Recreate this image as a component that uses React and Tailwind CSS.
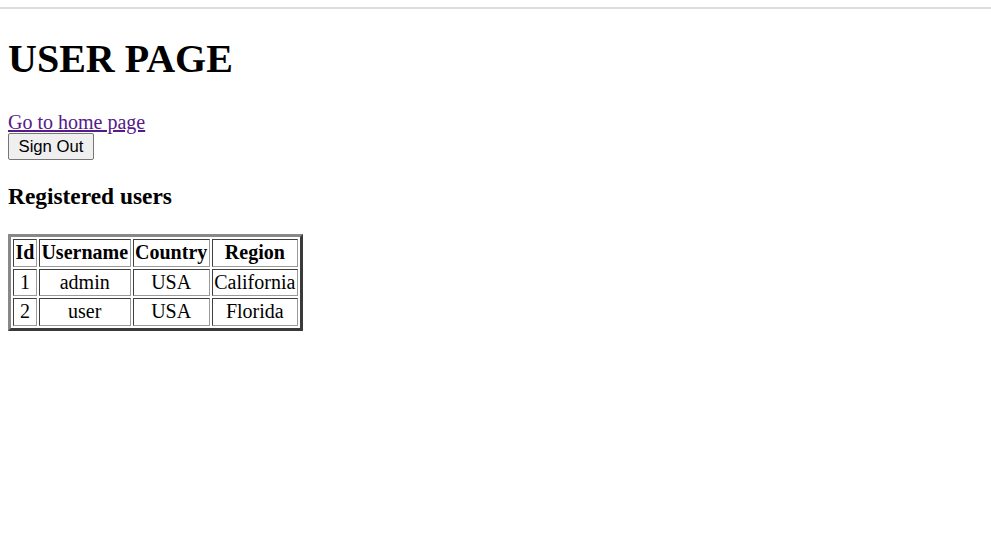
const users = [
  { id: 1, username: 'admin', country: 'USA', region: 'California' },
  { id: 2, username: 'user', country: 'USA', region: 'Florida' },
];

const cell =
  'border border-solid border-t-[#404040] border-l-[#404040] border-r-[#9a9a9a] border-b-[#9a9a9a] px-[1.5px] py-[1.25px] text-center';

export default function App() {
  return (
    <div className="min-h-[538px] bg-white font-['Liberation_Serif',serif] text-[20px] text-black">
      <div className="mt-[7px] h-[2px] w-full bg-[#dcdcdc]" />
      <div className="px-2">
        <h1 className="mt-[27px] mb-[29px] text-[40px] font-bold leading-[46px]">USER PAGE</h1>
        <a href="#" className="block w-fit leading-[22px] text-[#551a8b] underline">
          Go to home page
        </a>
        <button className="block h-[27px] rounded-[2px] border border-[#767676] bg-[#efefef] px-[9.5px] font-['Liberation_Sans',sans-serif] text-[16.7px] leading-[20px]">
          Sign Out
        </button>
        <h3 className="mt-[23px] mb-[24px] text-[23.4px] font-bold leading-[27px]">Registered users</h3>
        <table className="border-separate border-spacing-[2px] border-[3px] border-solid border-t-[#888888] border-l-[#888888] border-r-[#3a3a3a] border-b-[#3a3a3a] leading-[23px]">
          <thead>
            <tr>
              <th className={cell}>Id</th>
              <th className={cell}>Username</th>
              <th className={cell}>Country</th>
              <th className={cell}>Region</th>
            </tr>
          </thead>
          <tbody>
            {users.map((u) => (
              <tr key={u.id}>
                <td className={cell}>{u.id}</td>
                <td className={cell}>{u.username}</td>
                <td className={cell}>{u.country}</td>
                <td className={cell}>{u.region}</td>
              </tr>
            ))}
          </tbody>
        </table>
      </div>
    </div>
  );
}
